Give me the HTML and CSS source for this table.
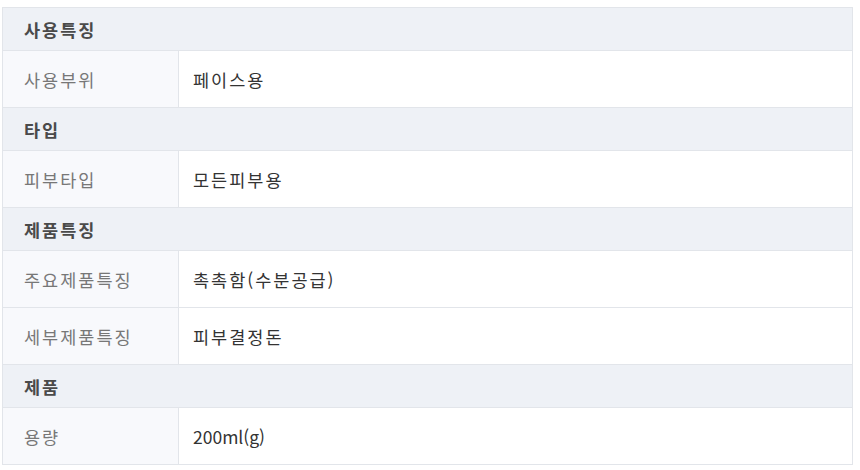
FILE: index.html
```html
<!DOCTYPE html>
<html lang="ko">
<head>
<meta charset="utf-8">
<link rel="stylesheet" href="styles.css">
</head>
<body>
<table class="spec">
  <tr class="group"><th colspan="2">사용특징</th></tr>
  <tr><td class="label">사용부위</td><td class="value">페이스용</td></tr>
  <tr class="group"><th colspan="2">타입</th></tr>
  <tr><td class="label">피부타입</td><td class="value">모든피부용</td></tr>
  <tr class="group"><th colspan="2">제품특징</th></tr>
  <tr><td class="label">주요제품특징</td><td class="value">촉촉함(수분공급)</td></tr>
  <tr><td class="label">세부제품특징</td><td class="value">피부결정돈</td></tr>
  <tr class="group"><th colspan="2">제품</th></tr>
  <tr><td class="label">용량</td><td class="value"><span class="latin">200ml(g)</span></td></tr>
</table>
</body>
</html>
```
FILE: styles.css
```css
html, body { margin: 0; padding: 0; background: #fff; }
body { padding: 7px 7px 0 2px; }
.spec {
  width: 851px;
  border-collapse: collapse;
  font-family: "Noto Sans CJK JP", "Noto Sans CJK KR", sans-serif;
  font-size: 17.5px;
  letter-spacing: 2px;
  border: 1px solid #e2e5ea;
}
.spec th, .spec td {
  border: 1px solid #e2e5ea;
  text-align: left;
  padding: 0 0 0 21px;
  line-height: 1.2;
}
.group th {
  background: #eef1f6;
  height: 42px;
  font-weight: 700;
  color: #4a4a4a;
}
.spec td { height: 56px; }
.label {
  width: 154px;
  background: #f8f9fc;
  color: #777;
  font-weight: 400;
}
.value {
  color: #333;
  padding-left: 14px !important;
}
.latin { letter-spacing: 0; }
```
